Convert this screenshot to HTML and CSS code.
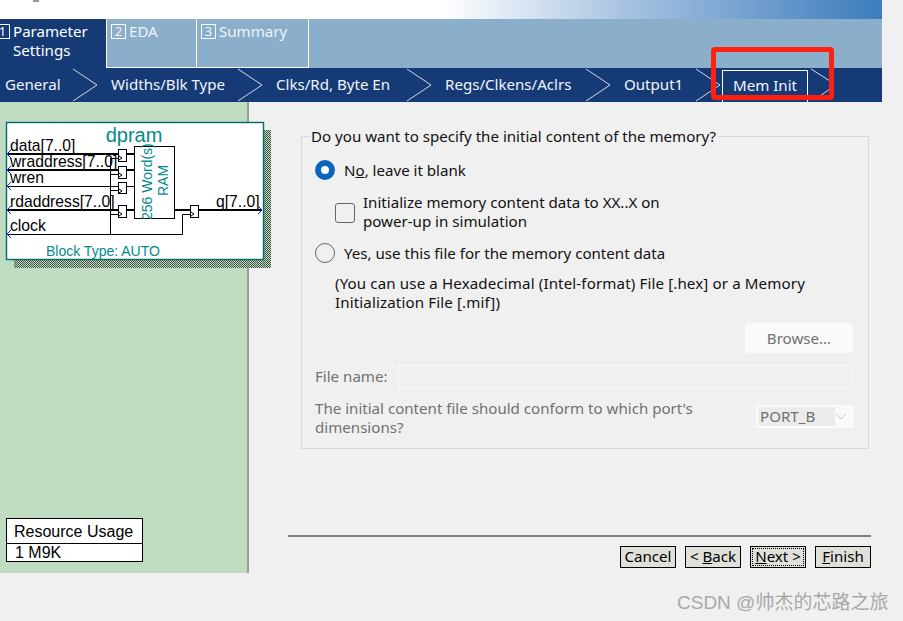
FILE: index.html
```html
<!DOCTYPE html>
<html lang="en">
<head>
<meta charset="UTF-8">
<meta name="viewport" content="width=device-width, initial-scale=1.0">
<title>Mem Init</title>
<link rel="stylesheet" href="styles.css">
</head>
<body>
<div class="wizard">
  <div class="banner"><span class="speck"></span></div>

  <div class="tabs">
    <div class="tab tab-active tab-first"><span class="tab-num">1</span><span>Parameter<br>Settings</span></div>
    <div class="tab tab-eda"><span class="tab-num">2</span><span>EDA</span></div>
    <div class="tab tab-summary"><span class="tab-num">3</span><span>Summary</span></div>
  </div>

  <div class="steps">
    <div class="step step-general"><span>General</span><svg class="chevron" width="24" height="34"><path d="M0 1 L24 17 L0 33"/></svg></div>
    <div class="step step-widths"><span>Widths/Blk Type</span><svg class="chevron" width="24" height="34"><path d="M0 1 L24 17 L0 33"/></svg></div>
    <div class="step step-clks"><span>Clks/Rd, Byte En</span><svg class="chevron" width="24" height="34"><path d="M0 1 L24 17 L0 33"/></svg></div>
    <div class="step step-regs"><span>Regs/Clkens/Aclrs</span><svg class="chevron" width="24" height="34"><path d="M0 1 L24 17 L0 33"/></svg></div>
    <div class="step step-output"><span>Output1</span><svg class="chevron" width="24" height="34"><path d="M0 1 L24 17 L0 33"/></svg></div>
    <div class="step-current">Mem Init</div>
    <svg class="chevron chevron-last" width="20" height="34"><path d="M0 1 L19 13 M19 21 L6 30"/></svg>
  </div>

  <div class="content">
    <div class="side">
      <svg class="symbol" width="275" height="156" viewBox="0 118 275 156">
        <defs>
          <pattern id="hatch" width="2" height="2" patternUnits="userSpaceOnUse">
            <rect width="2" height="2" fill="#c0dcc0"/>
            <rect width="1" height="1" fill="#3f4f3f"/>
            <rect x="1" y="1" width="1" height="1" fill="#3f4f3f"/>
          </pattern>
        </defs>
        <rect x="14" y="130" width="257" height="138" fill="url(#hatch)"/>
        <rect x="6.5" y="122.5" width="257" height="137" fill="#fff" stroke="#006a6a" stroke-width="1.4"/>

        <g stroke="#000" fill="none">
          <path stroke-width="2" d="M7 154H118M7 170H118M7 210H118M127 154H134M127 170H134M127 210H134M175 210H190M199 210H262"/>
          <path d="M7 186.5H118M127 186.5H134M7 234.5H182.5V214.5H190M110.5 158V234.5M110 158.5H118M110 174.5H118M110 190.5H118M110 214.5H118"/>
          <g fill="#fff">
            <rect x="118.5" y="149.5" width="8" height="12"/>
            <rect x="118.5" y="166.5" width="8" height="12"/>
            <rect x="118.5" y="182.5" width="8" height="11"/>
            <rect x="118.5" y="205.5" width="8" height="12"/>
            <rect x="190.5" y="205.5" width="8" height="12"/>
            <rect x="134.5" y="146.5" width="40" height="72"/>
          </g>
          <path d="M119 156l3 2-3 2M119 173l3 2-3 2M119 189l3 2-3 2M119 212l3 2-3 2M191 212l3 2-3 2"/>
        </g>

        <g stroke="#1a1ae0" fill="none">
          <path d="M11 150l-4 4 4 4M11 166l-4 4 4 4M11 182l-4 4 4 4M11 206l-4 4 4 4M11 230l-4 4 4 4M258 206l4 4-4 4"/>
        </g>

        <g class="pin-label">
          <text x="10" y="151">data[7..0]</text>
          <text x="10" y="167">wraddress[7..0]</text>
          <text x="10" y="183">wren</text>
          <text x="10" y="207">rdaddress[7..0]</text>
          <text x="10" y="231">clock</text>
          <text x="216" y="207">q[7..0]</text>
        </g>
        <text class="symbol-name" x="134" y="142" text-anchor="middle">dpram</text>
        <text class="symbol-note" transform="translate(152 220) rotate(-90)">256 Word(s)</text>
        <text class="symbol-note" transform="translate(168 196) rotate(-90)">RAM</text>
        <text class="symbol-note" x="46" y="256">Block Type: AUTO</text>
      </svg>

      <div class="usage">
        <div class="usage-head">Resource Usage</div>
        <div class="usage-value">1 M9K</div>
      </div>
    </div>

    <div class="main">
      <fieldset class="group">
        <legend>Do you want to specify the initial content of the memory?</legend>

        <div class="option option-no">
          <span class="radio radio-on"></span>
          <span>N<u>o</u>, leave it blank</span>
        </div>

        <div class="check-row">
          <span class="checkbox"></span>
          <span>Initialize memory content data to XX..X on<br>power-up in simulation</span>
        </div>

        <div class="option option-yes">
          <span class="radio"></span>
          <span>Yes, use this file for the memory content data</span>
        </div>

        <p class="hint">(You can use a Hexadecimal (Intel-format) File [.hex] or a Memory<br>Initialization File [.mif])</p>

        <div class="browse-row"><div class="browse">Browse...</div></div>

        <div class="file-row">
          <span class="muted">File name:</span>
          <div class="file-input"></div>
        </div>

        <div class="port-row">
          <span class="muted">The initial content file should conform to which port's<br>dimensions?</span>
          <div class="port-select">
            <span class="port-value">PORT_B</span>
            <svg width="12" height="7"><path d="M1 1 L6 6 L11 1" fill="none" stroke="#c4c4c4"/></svg>
          </div>
        </div>
      </fieldset>

      <div class="footer">
        <div class="buttons">
          <div class="btn">Cancel</div>
          <div class="btn">&lt; <u>B</u>ack</div>
          <div class="btn btn-focus"><span><u>N</u>ext &gt;</span></div>
          <div class="btn"><u>F</u>inish</div>
        </div>
      </div>
    </div>
  </div>
</div>

<div class="marker"></div>
<div class="watermark">CSDN @帅杰的芯路之旅</div>
</body>
</html>
```

FILE: styles.css
```css
html, body {
  margin: 0;
  padding: 0;
}

body {
  position: relative;
  width: 903px;
  height: 621px;
  overflow: hidden;
  background-color: #f0f0f0;
  font-family: "Noto Sans", sans-serif;
  font-size: 15.1px;
  color: #111;
}

.wizard {
  width: 882px;
}

.banner {
  height: 19px;
  background: linear-gradient(90deg, #fff 50%, #a3c0e0 72%, #3b7cbc 100%);
}

.speck {
  display: block;
  width: 6px;
  height: 2px;
  margin-left: 33px;
  background-color: #999;
}

.tabs {
  display: flex;
  height: 49px;
  background-color: #8baeca;
  color: #eef3f8;
  line-height: 19px;
}

.tab {
  display: flex;
  gap: 3px;
  box-sizing: border-box;
  padding: 3px 0 0 4px;
  border-right: 1px solid #fff;
  border-bottom: 1px solid #fff;
}

.tab-first {
  width: 107px;
  padding-left: 0;
  border: 0;
  border-right: 1px solid #fff;
  background-color: #153a75;
  color: #fff;
}

.tab-eda {
  width: 90px;
}

.tab-summary {
  width: 112px;
}

.tab-num {
  box-sizing: border-box;
  width: 15px;
  height: 15px;
  margin-top: 2px;
  border: 1px solid #fff;
  font-size: 13px;
  line-height: 13px;
  text-align: center;
}

.tab-first .tab-num {
  margin-left: -5px;
}

.steps {
  display: flex;
  height: 34px;
  background-color: #153a75;
  color: #f2f5fa;
  line-height: 33px;
}

.step {
  display: flex;
  justify-content: space-between;
  box-sizing: border-box;
  padding-left: 14px;
}

.step-general {
  width: 97px;
  padding-left: 5px;
}

.step-widths {
  width: 165px;
}

.step-clks {
  width: 169px;
}

.step-regs {
  width: 179px;
}

.step-output {
  width: 110px;
}

.chevron {
  display: block;
  flex: none;
}

.chevron path {
  fill: none;
  stroke: #d5dde8;
}

.chevron-last {
  margin-left: 3px;
}

.step-current {
  box-sizing: border-box;
  width: 86px;
  height: 32px;
  margin: 2px 0 0 2px;
  border: 1px solid #fff;
  border-bottom: 0;
  line-height: 29px;
  text-align: center;
}

.content {
  display: flex;
  height: 471px;
}

.side {
  display: flex;
  flex-direction: column;
  flex: none;
  box-sizing: border-box;
  width: 249px;
  padding: 16px 0 11px 0;
  border-right: 2px solid #9c9c9c;
  background-color: #c0dcc0;
}

.symbol {
  display: block;
  flex: none;
}

.pin-label text {
  font-family: "Liberation Sans", sans-serif;
  font-size: 15.7px;
  fill: #000;
}

.symbol-name {
  font-family: "Liberation Sans", sans-serif;
  font-size: 20px;
  fill: #008b8b;
}

.symbol-note {
  font-family: "Liberation Sans", sans-serif;
  font-size: 14px;
  fill: #008b8b;
}

.usage {
  box-sizing: border-box;
  width: 137px;
  height: 44px;
  margin: auto 0 0 6px;
  border: 1px solid #000;
  background-color: #fff;
  font-family: "Liberation Sans", sans-serif;
  font-size: 16px;
  color: #000;
}

.usage-head {
  box-sizing: border-box;
  height: 25px;
  padding-left: 7px;
  border-bottom: 1px solid #000;
  line-height: 26px;
}

.usage-value {
  padding-left: 8px;
  line-height: 17px;
}

.main {
  flex: none;
  width: 633px;
}

.group {
  box-sizing: border-box;
  width: 568px;
  height: 323px;
  margin: 24px 0 0 52px;
  padding: 0 0 0 13px;
  border: 1px solid #d8d8d8;
}

.group legend {
  padding: 0 2px 0 1px;
  margin-left: -5px;
  line-height: 20px;
}

.option {
  display: flex;
  align-items: center;
  gap: 9px;
  height: 20px;
}

.option-no {
  margin-top: 14px;
}

.option-yes {
  margin-top: 12px;
}

.radio {
  box-sizing: border-box;
  width: 20px;
  height: 20px;
  border: 1px solid #666;
  border-radius: 50%;
  background-color: #f0f0f0;
}

.radio-on {
  border: 6px solid #0b64bd;
  background-color: #fff;
}

.check-row {
  display: flex;
  gap: 8px;
  margin: 13px 0 0 20px;
  line-height: 19px;
}

.checkbox {
  box-sizing: border-box;
  width: 20px;
  height: 20px;
  margin-top: 10px;
  border: 1px solid #666;
  border-radius: 3px;
}

.hint {
  margin: 11px 0 0 20px;
  line-height: 19px;
  letter-spacing: 0.13px;
}

.browse-row {
  display: flex;
  justify-content: flex-end;
  margin: 11px 15px 0 0;
}

.browse {
  width: 108px;
  height: 30px;
  border-radius: 3px;
  background-color: #fafafa;
  color: #707070;
  line-height: 30px;
  text-align: center;
}

.muted {
  color: #707070;
  line-height: 19px;
}

.file-row {
  display: flex;
  align-items: center;
  justify-content: space-between;
  margin: 12px 15px 0 0;
}

.file-input {
  box-sizing: border-box;
  width: 455px;
  height: 23px;
  border: 1px solid #fafafa;
}

.port-row {
  display: flex;
  justify-content: space-between;
  margin: 11px 14px 0 0;
}

.port-select {
  display: flex;
  align-items: center;
  justify-content: space-between;
  box-sizing: border-box;
  width: 98px;
  height: 23px;
  margin-top: 6px;
  padding: 2px 7px 2px 2px;
  background-color: #fafafa;
}

.port-value {
  width: 78px;
  height: 100%;
  padding-left: 2px;
  box-sizing: border-box;
  background-color: #ececec;
  color: #707070;
  line-height: 19px;
}

.footer {
  box-sizing: border-box;
  width: 583px;
  height: 38px;
  margin: 86px 0 0 39px;
  border-top: 2px solid #808080;
}

.buttons {
  display: flex;
  justify-content: flex-end;
  gap: 9px;
  margin-top: 9px;
}

.btn {
  box-sizing: border-box;
  width: 56px;
  height: 22px;
  border: 1px solid #000;
  background-color: #e0e0da;
  color: #000;
  line-height: 19px;
  text-align: center;
}

.btn-focus span {
  display: block;
  height: 16px;
  margin: 1px;
  border: 1px dotted #000;
  line-height: 15px;
}

.marker {
  position: absolute;
  left: 711px;
  top: 47px;
  box-sizing: border-box;
  width: 123px;
  height: 53px;
  border: 5px solid #ff2010;
  border-radius: 4px;
}

.watermark {
  position: absolute;
  left: 677px;
  top: 591px;
  font-family: "Liberation Sans", "Noto Sans CJK SC", sans-serif;
  font-size: 19px;
  line-height: 24px;
  color: #a8a8a8;
  white-space: nowrap;
}
```
